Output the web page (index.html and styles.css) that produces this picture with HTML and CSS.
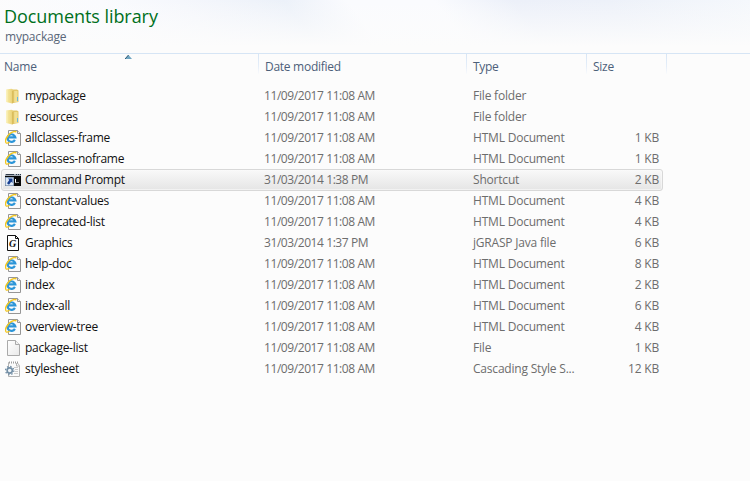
FILE: index.html
```html
<!DOCTYPE html>
<html lang="en">
<head>
<meta charset="utf-8">
<title>Documents library</title>
<link rel="stylesheet" href="styles.css">
</head>
<body>
<svg class="defs" width="0" height="0" aria-hidden="true">
  <defs>
    <linearGradient id="gold" x1="0" x2="1"><stop offset="0" stop-color="#f7eba6"/><stop offset=".55" stop-color="#f0dc88"/><stop offset="1" stop-color="#e6cb70"/></linearGradient>
    <linearGradient id="paper" x1="0" y1="0" x2="1" y2="1"><stop offset="0" stop-color="#fff"/><stop offset="1" stop-color="#e9e9e9"/></linearGradient>
    <symbol id="folder" viewBox="0 0 16 16">
      <path d="M7 1.5h5l1.5 1V14L8 15z" fill="#e3c768"/>
      <path d="M9.2 3h3.3v11H9.2z" fill="#f1df92"/>
      <path d="M12 9h1v4h-1z" fill="#68b8dc"/>
      <path d="M1.2 1.5 6.5.8l2 1.4v12.6l-1.5.7-5.8-1.5z" fill="url(#gold)"/>
      <path d="M7 3 8.5 2.6v12.2l-1.5.7z" fill="#dabd5c"/>
      <path d="M2 2v11.8" stroke="#fff6c7" stroke-width=".7"/>
    </symbol>
    <symbol id="html" viewBox="0 0 16 16">
      <path d="M3.5.5h9l3 3v12h-12z" fill="#fbfbfb" stroke="#969696"/>
      <path d="M12.5.5v3h3" fill="#eee" stroke="#969696"/>
      <path d="M9.9 9.9A3.9 3.8 0 1 1 10.3 7.3H3.2" fill="none" stroke="#2c95d8" stroke-width="2.2"/>
      <path d="M.9 12.7C-.5 10.5 2 5.2 6.3 2.7c2.3-1.4 4.4-1.7 4.9-.4" fill="none" stroke="#f2c620" stroke-width="1.5"/>
      <path d="M.9 12.7c1 .8 2.4.2 3.7-.7" fill="none" stroke="#f2c620" stroke-width="1.2"/>
    </symbol>
    <symbol id="prompt" viewBox="0 0 16 16">
      <path d="M0 2h16v12H0z" fill="#080808"/>
      <path d="M0 2h16v2H0z" fill="#a4acb5"/>
      <path d="M1 2.5h8" stroke="#313c4a"/><path d="M11 2.5h1m1 0h1m1 0h1" stroke="#263747"/>
      <path d="M10.5 7v3.5h1m1 0h1" fill="none" stroke="#fff"/>
      <path d="M.5 5.5h8v8h-8z" fill="#dce7f4" stroke="#8fa5c0"/>
      <path d="M3 6.5h4.5V11L6.2 9.8 4 12.8 2 11.3l2.3-3.4z" fill="#173f91"/>
    </symbol>
    <symbol id="grasp" viewBox="0 0 16 16">
      <path d="M2.5.5h8l3 3v12h-11z" fill="#fff" stroke="#111"/>
      <path d="M10.5.5v3h3" fill="none" stroke="#111"/>
      <text x="4.1" y="12" class="g-mark">G</text>
    </symbol>
    <symbol id="file" viewBox="0 0 16 16">
      <path d="M2.5.5h8l4 4v11h-12z" fill="url(#paper)" stroke="#aaa"/>
      <path d="M10.5.5v4h4" fill="#f1f1f1" stroke="#aaa"/>
    </symbol>
    <symbol id="css" viewBox="0 0 16 16">
      <path d="M3.5 1.5h8.5l2.5 3v11h-11z" fill="#fafafa" stroke="#b4b4b4"/>
      <path d="M4 1.5h9" stroke="#fff" stroke-width="1.6"/><path d="M4 1.5h9" stroke="#9e9e9e" stroke-width="2" stroke-dasharray="1 1"/>
      <path d="M11.5 2v3h3" fill="none" stroke="#b4b4b4"/>
      <path d="M9 6.5h4M10 8.5h3M10 10.5h3M9 12.5h4" stroke="#ccc"/>
      <circle cx="4.7" cy="9.5" r="4.1" fill="none" stroke="#718da4" stroke-width="1.3" stroke-dasharray="1.4 1.82"/>
      <circle cx="4.7" cy="9.5" r="2.6" fill="#eef4f8" stroke="#738fa6" stroke-width="1.6"/>
    </symbol>
  </defs>
</svg>
<header class="library">
  <h1>Documents library</h1>
  <p>mypackage</p>
</header>
<main>
  <div class="columns">
    <div class="col">Name<svg class="sort" width="7" height="4" viewBox="0 0 7 4"><path d="M3.5 0 7 4H0z" fill="#6fa5c1"/><path d="M3.5 0 0 4" stroke="#2d5975"/></svg></div>
    <div class="col">Date modified</div><div class="col">Type</div><div class="col">Size</div>
  </div>
  <div class="files">
    <div class="row"><svg class="icon"><use href="#folder"/></svg><span class="name">mypackage</span><span class="date">11/09/2017 11:08 AM</span><span class="type">File folder</span></div>
    <div class="row"><svg class="icon"><use href="#folder"/></svg><span class="name">resources</span><span class="date">11/09/2017 11:08 AM</span><span class="type">File folder</span></div>
    <div class="row"><svg class="icon"><use href="#html"/></svg><span class="name">allclasses-frame</span><span class="date">11/09/2017 11:08 AM</span><span class="type">HTML Document</span><span class="size">1 KB</span></div>
    <div class="row"><svg class="icon"><use href="#html"/></svg><span class="name">allclasses-noframe</span><span class="date">11/09/2017 11:08 AM</span><span class="type">HTML Document</span><span class="size">1 KB</span></div>
    <div class="row selected"><svg class="icon"><use href="#prompt"/></svg><span class="name">Command Prompt</span><span class="date">31/03/2014 1:38 PM</span><span class="type">Shortcut</span><span class="size">2 KB</span></div>
    <div class="row"><svg class="icon"><use href="#html"/></svg><span class="name">constant-values</span><span class="date">11/09/2017 11:08 AM</span><span class="type">HTML Document</span><span class="size">4 KB</span></div>
    <div class="row"><svg class="icon"><use href="#html"/></svg><span class="name">deprecated-list</span><span class="date">11/09/2017 11:08 AM</span><span class="type">HTML Document</span><span class="size">4 KB</span></div>
    <div class="row"><svg class="icon"><use href="#grasp"/></svg><span class="name">Graphics</span><span class="date">31/03/2014 1:37 PM</span><span class="type">jGRASP Java file</span><span class="size">6 KB</span></div>
    <div class="row"><svg class="icon"><use href="#html"/></svg><span class="name">help-doc</span><span class="date">11/09/2017 11:08 AM</span><span class="type">HTML Document</span><span class="size">8 KB</span></div>
    <div class="row"><svg class="icon"><use href="#html"/></svg><span class="name">index</span><span class="date">11/09/2017 11:08 AM</span><span class="type">HTML Document</span><span class="size">2 KB</span></div>
    <div class="row"><svg class="icon"><use href="#html"/></svg><span class="name">index-all</span><span class="date">11/09/2017 11:08 AM</span><span class="type">HTML Document</span><span class="size">6 KB</span></div>
    <div class="row"><svg class="icon"><use href="#html"/></svg><span class="name">overview-tree</span><span class="date">11/09/2017 11:08 AM</span><span class="type">HTML Document</span><span class="size">4 KB</span></div>
    <div class="row"><svg class="icon"><use href="#file"/></svg><span class="name">package-list</span><span class="date">11/09/2017 11:08 AM</span><span class="type">File</span><span class="size">1 KB</span></div>
    <div class="row"><svg class="icon"><use href="#css"/></svg><span class="name">stylesheet</span><span class="date">11/09/2017 11:08 AM</span><span class="type">Cascading Style S...</span><span class="size">12 KB</span></div>
  </div>
</main>
</body>
</html>
```
FILE: styles.css
```css
* { box-sizing: border-box; }
body {
  margin: 0;
  height: 481px;
  overflow: hidden;
  background: #fcfcfc;
  color: #6d6d6d;
  font: 12px/20px "Open Sans", "Noto Sans", sans-serif;
  letter-spacing: -0.2px;
}
.defs { position: absolute; }
.library {
  height: 54px;
  padding: 4px 4px 0;
  border-bottom: 1px solid #d6e5f5;
  background:
    linear-gradient(to bottom, #fcfcfc00, #fcfcfc 88%),
    linear-gradient(52deg, #fcfcfc 0, #fafbfe 18%, #f5f7fc 28%, #eff3fa 37%, #ecf1f9 41%, #fafbfe 49%, #fafbfe 60%, #ecf0f9 70%, #edf1f9 82%, #f5f8fc 100%);
}
h1 {
  margin: 0;
  color: #00701c;
  font-size: 18px;
  font-weight: 400;
  line-height: 24px;
  letter-spacing: -0.06px;
}
.library p { margin: 0 0 0 1px; line-height: 18px; color: #5a6779; }
.columns {
  display: grid;
  grid-template-columns: 259px 208px 120px 80px;
  height: 31px;
  color: #4c607a;
}
.col {
  position: relative;
  height: 20px;
  padding: 3px 0 0 6px;
  border-right: 1px solid;
  border-image: linear-gradient(#d6e5f5, #e5eef9 60%, #fcfcfc) 1;
  letter-spacing: -0.28px;
}
.col:first-child { padding-left: 4px; letter-spacing: -0.2px; }
.sort { position: absolute; left: 125px; top: 1px; }
.row {
  display: grid;
  grid-template-columns: 20px 239px 209px 113px 73px;
  align-items: center;
  width: 662px;
  height: 21px;
  margin-left: 1px;
  padding-left: 4px;
}
.icon { width: 16px; height: 16px; }
.name { color: #111; letter-spacing: -0.27px; }
.date { letter-spacing: -0.42px; }
.size { text-align: right; }
.selected {
  border: 1px solid #d8d8d8;
  border-radius: 3px;
  padding-left: 3px;
  height: 22px;
  margin-bottom: -1px;
  background: linear-gradient(#f9f9f9, #e5e5e5);
  box-shadow: inset 0 0 0 1px #fafafa99;
}
.g-mark { font: italic bold 10px "Liberation Serif", serif; fill: #111; letter-spacing: 0; }
```
